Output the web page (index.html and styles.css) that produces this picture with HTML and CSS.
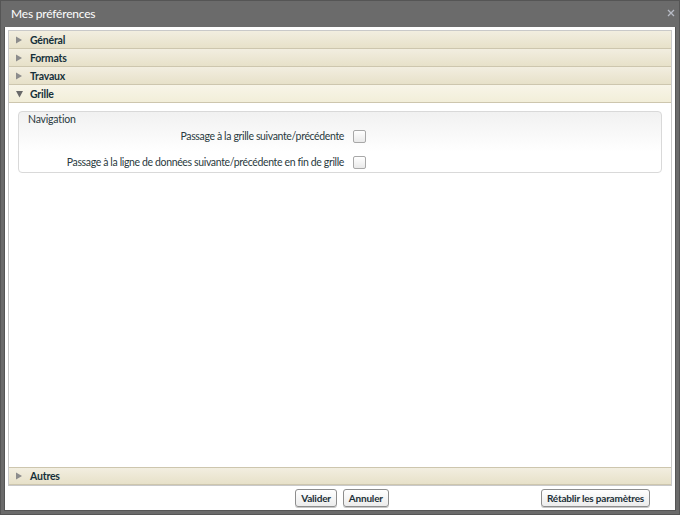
FILE: index.html
```html
<!DOCTYPE html>
<html>
<head>
<meta charset="utf-8">
<link rel="stylesheet" href="styles.css">
</head>
<body>
<div class="window">
  <div class="titlebar">
    <span class="title">Mes préférences</span>
    <span class="close">
      <svg width="8" height="8" viewBox="0 0 8 8"><path d="M1 1L7 7M7 1L1 7" stroke="#b9bcc6" stroke-width="1.3"/></svg>
    </span>
  </div>
  <div class="frame">
    <div class="panel">
      <div class="accordion">
        <div class="header"><svg class="arrow" width="6" height="8" viewBox="0 0 6 8"><path d="M0 0.5L6 4L0 7.5Z" fill="#8c8c8c"/></svg><span>Général</span></div>
        <div class="header"><svg class="arrow" width="6" height="8" viewBox="0 0 6 8"><path d="M0 0.5L6 4L0 7.5Z" fill="#8c8c8c"/></svg><span>Formats</span></div>
        <div class="header"><svg class="arrow" width="6" height="8" viewBox="0 0 6 8"><path d="M0 0.5L6 4L0 7.5Z" fill="#8c8c8c"/></svg><span>Travaux</span></div>
        <div class="header active"><svg class="arrow" width="7" height="8" viewBox="0 0 7 8"><path d="M0 1L7 1L3.5 7.5Z" fill="#6a6a6a"/></svg><span>Grille</span></div>
        <div class="content">
          <div class="fieldset">
            <div class="legend">Navigation</div>
            <div class="row first">
              <span class="label">Passage à la grille suivante/précédente</span>
              <span class="check"></span>
            </div>
            <div class="row">
              <span class="label">Passage à la ligne de données suivante/précédente en fin de grille</span>
              <span class="check"></span>
            </div>
          </div>
        </div>
        <div class="header last"><svg class="arrow" width="6" height="8" viewBox="0 0 6 8"><path d="M0 0.5L6 4L0 7.5Z" fill="#8c8c8c"/></svg><span>Autres</span></div>
      </div>
      <div class="buttons">
        <div class="spacer"></div>
        <div class="group">
          <button class="btn">Valider</button>
          <button class="btn">Annuler</button>
        </div>
        <div class="right">
          <button class="btn">Rétablir les paramètres</button>
        </div>
      </div>
    </div>
  </div>
</div>
</body>
</html>
```

FILE: styles.css
```css
* { box-sizing: border-box; }
html, body { margin: 0; padding: 0; }
body {
  width: 680px;
  height: 515px;
  font-family: Lato, "Open Sans", sans-serif;
  overflow: hidden;
}
.window {
  width: 680px;
  height: 515px;
  background: #6b6b6b;
  border: 1px solid #555;
  display: flex;
  flex-direction: column;
}
.titlebar {
  height: 26px;
  display: flex;
  align-items: center;
  justify-content: space-between;
  padding: 0 4px 2px 10px;
}
.title {
  color: #fff;
  font-size: 12px;
  letter-spacing: -0.2px;
}
.close {
  display: flex;
  align-items: center;
}
.frame {
  flex: 1;
  padding: 0 3px 3px 3px;
  display: flex;
}
.panel {
  flex: 1;
  background: #fff;
  padding: 3px 3px 0 3px;
  display: flex;
  flex-direction: column;
  border: 1px solid #555;
  border-top: none;
}
.accordion {
  flex: 1;
  border: 1px solid #c9c9c9;
  display: flex;
  flex-direction: column;
}
.header {
  height: 18px;
  flex: 0 0 18px;
  display: flex;
  align-items: center;
  padding-left: 7px;
  font-size: 10.5px;
  font-weight: bold;
  letter-spacing: -0.2px;
  color: #16303a;
  background: linear-gradient(#f2eee0, #e7e1c9);
  border-bottom: 1px solid #cdc6ae;
}
.header.active {
  background: linear-gradient(#f8f5e8, #f2eed9);
}
.header.last {
  border-top: 1px solid #cdc6ae;
  border-bottom: 1px solid #cdc6ae;
}
.arrow {
  flex: 0 0 auto;
  margin-right: 8px;
}
.header.active .arrow { margin-right: 7px; }
.content {
  flex: 1;
  padding: 8px 9px 0 9px;
}
.fieldset {
  border: 1px solid #d9d9d9;
  border-radius: 4px;
  background: linear-gradient(#f1f1f1, #ffffff 40px);
}
.legend {
  height: 14px;
  line-height: 14px;
  font-size: 10.5px;
  letter-spacing: -0.2px;
  color: #2a3a40;
  padding-left: 9px;
}
.row {
  height: 20px;
  margin-top: 6px;
  display: flex;
  align-items: center;
}
.row.first { margin-top: 0; }
.label {
  width: 325px;
  text-align: right;
  font-size: 10.5px;
  letter-spacing: -0.36px;
  color: #2a3a40;
}
.check {
  width: 13px;
  height: 13px;
  margin-left: 9px;
  border: 1px solid #a8a8a8;
  border-radius: 2px;
  background: linear-gradient(#ffffff, #e9e9e9);
}
.buttons {
  height: 24px;
  display: grid;
  grid-template-columns: 1fr auto 1fr;
  align-items: center;
}
.group {
  display: flex;
  gap: 6px;
  padding-left: 4px;
}
.right {
  display: flex;
  justify-content: flex-end;
  padding-right: 22px;
}
.btn {
  height: 18px;
  padding: 0 5px;
  font-family: Lato, "Open Sans", sans-serif;
  font-size: 10px;
  font-weight: bold;
  letter-spacing: -0.2px;
  color: #1c3038;
  border: 1px solid #8d8d8d;
  border-radius: 3px;
  background: linear-gradient(#ffffff, #ececec);
  box-shadow: 0 1px 0 #c8c8c8;
}
```
